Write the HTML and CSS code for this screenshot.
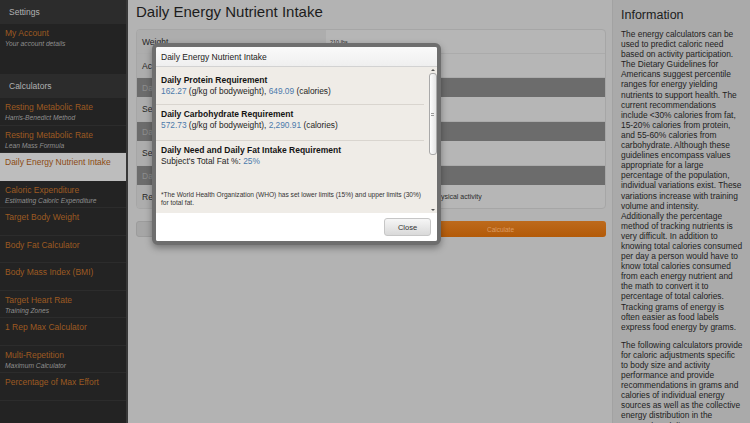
FILE: index.html
```html
<!DOCTYPE html>
<html lang="en">
<head>
<meta charset="utf-8">
<title>Daily Energy Nutrient Intake</title>
<link rel="stylesheet" href="styles.css">
</head>
<body>
<div class="app">
  <nav class="sidebar">
    <div class="side-head">Settings</div>
    <div class="group group-account">
      <div class="item"><div class="item-title">My Account</div><div class="item-sub">Your account details</div></div>
    </div>
    <div class="side-head">Calculators</div>
    <div class="group">
      <div class="item"><div class="item-title">Resting Metabolic Rate</div><div class="item-sub">Harris-Benedict Method</div></div>
      <div class="item"><div class="item-title">Resting Metabolic Rate</div><div class="item-sub">Lean Mass Formula</div></div>
      <div class="item item-active"><div class="item-title">Daily Energy Nutrient Intake</div></div>
      <div class="item"><div class="item-title">Caloric Expenditure</div><div class="item-sub">Estimating Caloric Expenditure</div></div>
      <div class="item"><div class="item-title">Target Body Weight</div></div>
      <div class="item"><div class="item-title">Body Fat Calculator</div></div>
      <div class="item"><div class="item-title">Body Mass Index (BMI)</div></div>
      <div class="item"><div class="item-title">Target Heart Rate</div><div class="item-sub">Training Zones</div></div>
      <div class="item"><div class="item-title">1 Rep Max Calculator</div></div>
      <div class="item"><div class="item-title">Multi-Repetition</div><div class="item-sub">Maximum Calculator</div></div>
      <div class="item"><div class="item-title">Percentage of Max Effort</div></div>
    </div>
  </nav>

  <main class="main">
    <h1 class="page-title">Daily Energy Nutrient Intake</h1>
    <div class="form">
      <div class="row row-a"><div class="label">Weight</div><div class="value value-small">210 lbs</div></div>
      <div class="row row-a"><div class="label">Activity Level</div><div class="value"></div></div>
      <div class="bar">Daily Protein</div>
      <div class="row row-b"><div class="label">Select Goal</div><div class="value"></div></div>
      <div class="bar">Daily Carbohydrate</div>
      <div class="row row-b"><div class="label">Select Goal</div><div class="value"></div></div>
      <div class="bar">Daily Fat</div>
      <div class="row row-c"><div class="label">Recommended</div><div class="value">Moderate to vigorous intensity of physical activity</div></div>
    </div>
    <div class="buttons">
      <div class="btn btn-reset">Reset</div>
      <div class="btn btn-calc">Calculate</div>
    </div>
  </main>

  <aside class="info">
    <h2 class="info-title">Information</h2>
    <p class="info-text">The energy calculators can be<br>used to predict caloric need<br>based on activity participation.<br>The Dietary Guidelines for<br>Americans suggest percentile<br>ranges for energy yielding<br>nutrients to support health. The<br>current recommendations<br>include &lt;30% calories from fat,<br>15-20% calories from protein,<br>and 55-60% calories from<br>carbohydrate. Although these<br>guidelines encompass values<br>appropriate for a large<br>percentage of the population,<br>individual variations exist. These<br>variations increase with training<br>volume and intensity.<br>Additionally the percentage<br>method of tracking nutrients is<br>very difficult. In addition to<br>knowing total calories consumed<br>per day a person would have to<br>know total calories consumed<br>from each energy nutrient and<br>the math to convert it to<br>percentage of total calories.<br>Tracking grams of energy is<br>often easier as food labels<br>express food energy by grams.</p>
    <p class="info-text">The following calculators provide<br>for caloric adjustments specific<br>to body size and activity<br>performance and provide<br>recommendations in grams and<br>calories of individual energy<br>sources as well as the collective<br>energy distribution in the<br>personal total diet. To meet</p>
  </aside>
</div>

<div class="modal">
  <div class="modal-head">Daily Energy Nutrient Intake</div>
  <div class="modal-body">
    <div class="modal-text">
      <div class="result result-first">
        <div class="result-title">Daily Protein Requirement</div>
        <div class="result-line"><span class="num">162.27</span> (g/kg of bodyweight), <span class="num">649.09</span> (calories)</div>
      </div>
      <div class="result result-second">
        <div class="result-title">Daily Carbohydrate Requirement</div>
        <div class="result-line"><span class="num">572.73</span> (g/kg of bodyweight), <span class="num">2,290.91</span> (calories)</div>
      </div>
      <div class="result result-last">
        <div class="result-title">Daily Need and Daily Fat Intake Requirement</div>
        <div class="result-line">Subject's Total Fat %: <span class="num">25%</span></div>
      </div>
      <div class="footnote">*The World Health Organization (WHO) has set lower limits (15%) and upper limits (30%)<br>for total fat.</div>
    </div>
    <div class="scrollbar">
      <div class="arrow arrow-up"></div>
      <div class="thumb"><div class="grip"></div></div>
      <div class="track-space"></div>
      <div class="arrow arrow-down"></div>
    </div>
  </div>
  <div class="modal-foot">
    <div class="close-btn">Close</div>
  </div>
</div>
</body>
</html>
```

FILE: styles.css
```css
* { box-sizing: border-box; }
html, body {
  margin: 0;
  padding: 0;
  width: 750px;
  height: 423px;
  overflow: hidden;
  font-family: "Liberation Sans", Arial, sans-serif;
  background: #b3b3b3;
}

.app {
  display: flex;
  width: 750px;
  height: 423px;
}

/* Sidebar */
.sidebar {
  width: 128px;
  flex: none;
  background: #232323;
  border-right: 2px solid #383838;
}
.side-head {
  height: 24px;
  line-height: 24px;
  padding-left: 9px;
  background: #2c2c2c;
  color: #b2b2b2;
  font-size: 8.5px;
}
.group-account { height: 50px; }
.group-account .item { border-bottom: none; }
.item {
  height: 27.5px;
  padding: 4px 0 0 5px;
  border-bottom: 1px solid #2c2c2c;
}
.item-title {
  font-size: 8.5px;
  line-height: 11px;
  color: #9d5a22;
  white-space: nowrap;
}
.item-sub {
  font-size: 6.7px;
  line-height: 9px;
  font-style: italic;
  color: #8f8f8f;
  white-space: nowrap;
}
.item-active {
  background: #bdbdbd;
  border-bottom-color: #bdbdbd;
}
.item-active .item-title { color: #8c4a12; }

/* Main */
.main {
  flex: 1;
  padding: 3px 6px 0 8px;
  background: #b3b3b3;
}
.page-title {
  margin: 0;
  font-size: 15px;
  line-height: 18px;
  font-weight: normal;
  color: #1c1c1c;
}
.form {
  margin-top: 8px;
  border: 1px solid #a6a6a6;
  border-radius: 4px;
  overflow: hidden;
  background: #b6b6b6;
}
.row {
  display: flex;
  border-bottom: 1px solid #ababab;
}
.row-a { height: 24px; }
.row-b { height: 25px; }
.row-c { height: 23px; border-bottom: none; }
.label {
  width: 189px;
  background: #adadad;
  padding-left: 5px;
  font-size: 8.5px;
  color: #262626;
  display: flex;
  align-items: center;
}
.value {
  flex: 1;
  padding-left: 4px;
  font-size: 7px;
  color: #2c2c2c;
  display: flex;
  align-items: center;
  white-space: nowrap;
}
.value-small { font-size: 5.5px; }
.bar {
  height: 19px;
  background: #6c6c6c;
  padding-left: 5px;
  font-size: 8.5px;
  color: #8e8e8e;
  display: flex;
  align-items: center;
}
.buttons {
  display: grid;
  grid-template-columns: 253px 1fr;
  gap: 6px;
  margin-top: 12px;
}
.btn {
  height: 16px;
  border-radius: 3px;
  font-size: 6.5px;
  display: flex;
  align-items: center;
  justify-content: center;
}
.btn-reset {
  background: #a6a6a6;
  border: 1px solid #9c9c9c;
  color: #777;
}
.btn-calc {
  background: linear-gradient(#bd6a1c, #b35a08);
  color: #dc9c62;
}

/* Info panel */
.info {
  width: 138px;
  flex: none;
  background: #aaaaaa;
  border-left: 1px solid #a2a2a2;
  padding: 8px 0 0 8px;
  overflow: hidden;
}
.info-title {
  margin: 0;
  font-size: 12.5px;
  line-height: 15px;
  font-weight: normal;
  color: #1c1c1c;
}
.info-text {
  margin: 6px 0 0;
  font-size: 8.4px;
  line-height: 10.1px;
  color: #1e1e1e;
  white-space: nowrap;
}
.info-text + .info-text { margin-top: 8px; }

/* Modal */
.modal {
  position: absolute;
  left: 152px;
  top: 43px;
  width: 289px;
  height: 202px;
  border: 4px solid #6e6e6e;
  border-radius: 6px;
  box-shadow: 0 3px 7px rgba(0, 0, 0, 0.35);
  background: #fff;
  display: flex;
  flex-direction: column;
  overflow: hidden;
}
.modal-head {
  height: 20px;
  flex: none;
  padding-left: 5px;
  line-height: 20px;
  font-size: 8.5px;
  color: #222;
  background: linear-gradient(#fafafa, #efefef);
  border-bottom: 1px solid #d2d2d2;
}
.modal-body {
  height: 146px;
  flex: none;
  display: flex;
  background: #efece7;
}
.modal-text {
  flex: 1;
  padding-top: 4px;
  margin-right: 3px;
}
.result {
  padding: 4px 0 8px 5px;
  border-bottom: 1px solid #d9d5cf;
}
.result-first { padding-bottom: 7px; }
.result-second { padding-bottom: 9px; }
.result-last {
  border-bottom: none;
  padding-bottom: 0;
}
.result-title {
  font-size: 8.5px;
  line-height: 11px;
  font-weight: bold;
  color: #141414;
  white-space: nowrap;
}
.result-line {
  font-size: 8.35px;
  line-height: 11px;
  color: #1e1e1e;
  white-space: nowrap;
}
.num { color: #4c7aab; }
.footnote {
  margin-top: 24px;
  padding-left: 5px;
  font-size: 6.6px;
  line-height: 7.5px;
  color: #333;
  white-space: nowrap;
}
.scrollbar {
  width: 10px;
  flex: none;
  display: flex;
  flex-direction: column;
  align-items: center;
  padding: 2px 0 2px 1px;
}
.arrow {
  width: 0;
  height: 0;
  border-left: 2px solid transparent;
  border-right: 2px solid transparent;
  flex: none;
}
.arrow-up { border-bottom: 2px solid #555; margin-bottom: 2px; }
.arrow-down { border-top: 2px solid #555; }
.thumb {
  width: 8px;
  height: 82px;
  border: 1px solid #a9a9a9;
  border-radius: 3px;
  background: linear-gradient(90deg, #fdfdfd, #e4e4e4);
  display: flex;
  align-items: center;
  justify-content: center;
  flex: none;
}
.grip {
  width: 3px;
  height: 3px;
  border-top: 1px solid #999;
  border-bottom: 1px solid #999;
}
.track-space { flex: 1; }
.modal-foot {
  flex: 1;
  display: flex;
  justify-content: flex-end;
  align-items: flex-start;
  padding: 5px 6px 0 0;
  background: #fff;
}
.close-btn {
  width: 47px;
  height: 18px;
  border: 1px solid #c6c6c6;
  border-radius: 3px;
  background: linear-gradient(#f6f6f6, #d9d9d9);
  font-size: 7.5px;
  color: #333;
  display: flex;
  align-items: center;
  justify-content: center;
}
```
